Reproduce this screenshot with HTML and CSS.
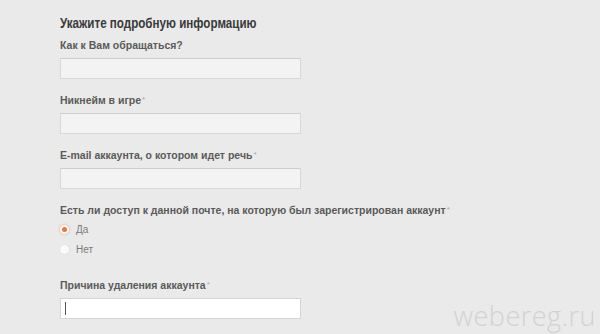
FILE: index.html
```html
<!DOCTYPE html>
<html lang="ru">
<head>
<meta charset="utf-8">
<title>Форма</title>
<link rel="stylesheet" href="styles.css">
</head>
<body>
<div class="page">
  <form class="form">
    <h1 class="title"><span class="title-text">Укажите подробную информацию</span></h1>
    <div class="field">
      <div class="label">Как к Вам обращаться?</div>
      <div class="input"></div>
    </div>
    <div class="field">
      <div class="label">Никнейм в игре<span class="req">*</span></div>
      <div class="input"></div>
    </div>
    <div class="field">
      <div class="label">E-mail аккаунта, о котором идет речь<span class="req">*</span></div>
      <div class="input"></div>
    </div>
    <div class="field radios-field">
      <div class="label">Есть ли доступ к данной почте, на которую был зарегистрирован аккаунт<span class="req">*</span></div>
      <div class="radios">
        <div class="radio-row"><span class="radio checked"></span><span class="radio-text">Да</span></div>
        <div class="radio-row"><span class="radio"></span><span class="radio-text">Нет</span></div>
      </div>
    </div>
    <div class="field">
      <div class="label">Причина удаления аккаунта<span class="req">*</span></div>
      <div class="input active"><span class="caret"></span></div>
    </div>
  </form>
  <div class="watermark">webereg.ru</div>
</div>
</body>
</html>
```

FILE: styles.css
```css
html, body {
  margin: 0;
  padding: 0;
}
body {
  background: #ebebeb;
  width: 600px;
  height: 334px;
  overflow: hidden;
}
.page {
  position: relative;
  width: 600px;
  height: 334px;
  background: #eaeaea;
}
.form {
  padding: 15px 0 0 60px;
  margin: 0;
}
.title {
  margin: 0 0 8px 0;
  font-family: "Liberation Sans", Arial, sans-serif;
  font-weight: bold;
  font-size: 14px;
  line-height: 16px;
  color: #3a3a3a;
  white-space: nowrap;
}
.title-text {
  display: inline-block;
  transform: scaleX(0.83);
  transform-origin: left center;
}
.field {
  margin-bottom: 15px;
}
.label {
  font-family: "Liberation Sans", Arial, sans-serif;
  font-weight: bold;
  font-size: 10.5px;
  line-height: 12px;
  color: #5a5a5a;
  margin-bottom: 7px;
  white-space: nowrap;
}
.req {
  color: #a8a8a8;
  font-weight: normal;
  font-size: 8px;
  vertical-align: top;
  margin-left: 1px;
}
.input {
  box-sizing: border-box;
  width: 241px;
  height: 21px;
  background: #f3f3f3;
  border: 1px solid #d8d8d8;
  border-top-color: #cdcdcd;
  display: flex;
  align-items: center;
}
.input.active {
  background: #ffffff;
  border-color: #d4d4d4;
}
.caret {
  display: block;
  width: 1px;
  height: 13px;
  margin-left: 4px;
  background: #555;
}
.radios-field .label {
  margin-bottom: 3px;
}
.radios-field {
  margin-bottom: 20px;
}
.radio-row {
  height: 20px;
  display: flex;
  align-items: center;
}
.radio {
  box-sizing: border-box;
  width: 11px;
  height: 11px;
  border-radius: 50%;
  background: #fafafa;
  border: 1px solid #e2e2e2;
  margin-left: -1px;
  display: flex;
  align-items: center;
  justify-content: center;
}
.radio.checked {
  border-color: #f0d2c0;
  box-shadow: 0 0 2px #f3c7ad;
}
.radio.checked::after {
  content: "";
  display: block;
  width: 5px;
  height: 5px;
  border-radius: 50%;
  background: #e8773c;
}
.radio-text {
  margin-left: 6px;
  font-family: "Liberation Sans", Arial, sans-serif;
  font-size: 10px;
  color: #7a7a7a;
}
.watermark {
  position: absolute;
  right: 4px;
  bottom: 3px;
  font-family: "Open Sans", "DejaVu Sans", sans-serif;
  font-weight: 300;
  font-size: 27px;
  line-height: 30px;
  color: #d2d2d2;
  letter-spacing: 0.5px;
}
```
